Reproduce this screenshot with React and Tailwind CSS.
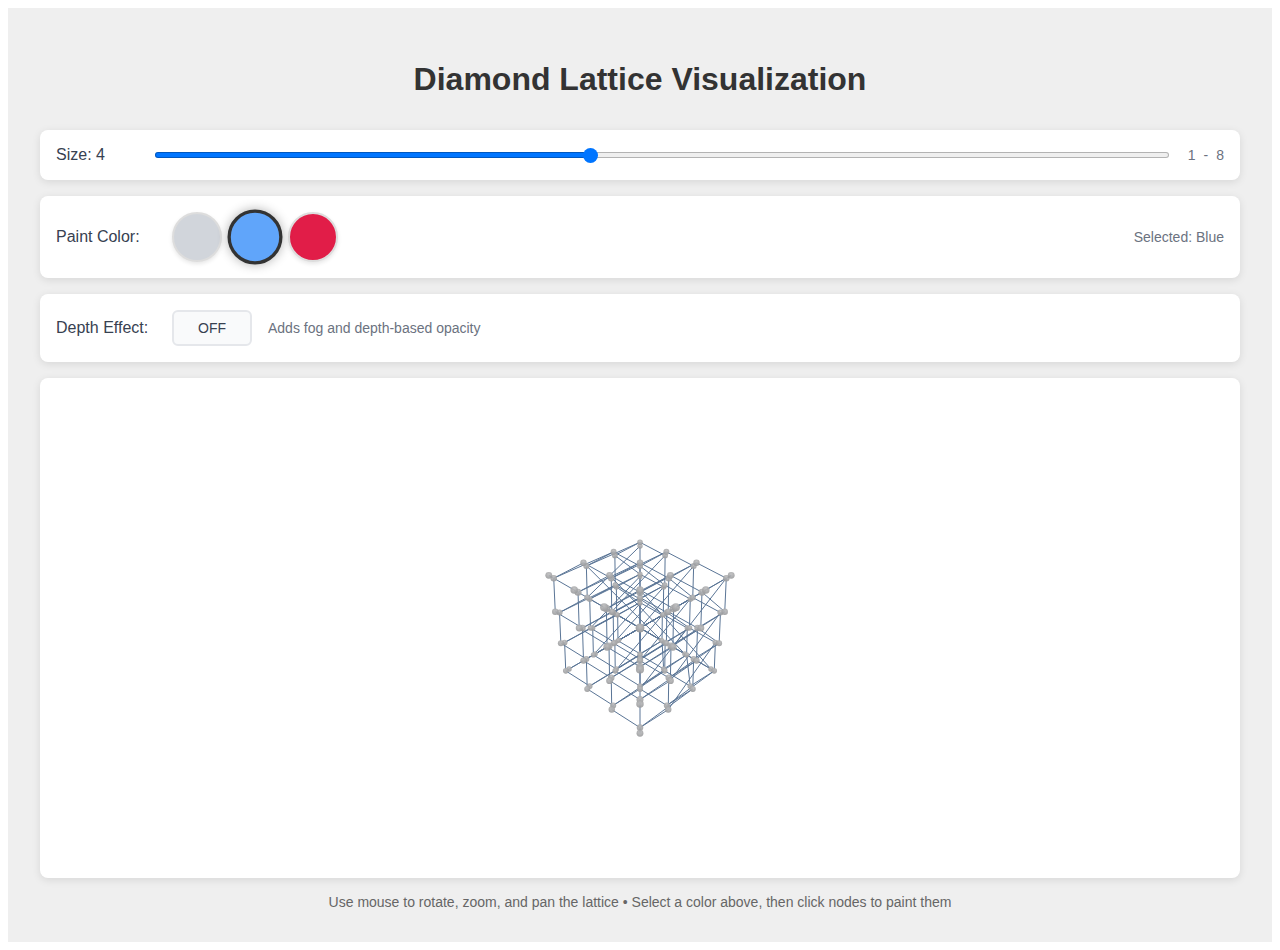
import { useState } from "react";

const CELL_OFFSET = 0.25;
const CAMERA = 5;
const FOCAL = 325.8;

// Perspective projection for a camera on the cube diagonal, looking at the origin.
function project(x, y, z) {
  const depth = (3 * CAMERA - x - y - z) / Math.sqrt(3);
  const f = FOCAL / depth;
  return {
    x: (f * (x - z)) / Math.SQRT2,
    y: (-f * (2 * y - x - z)) / Math.sqrt(6),
    r: 0.08 * f,
    depth,
  };
}

// Two interleaved cubic sublattices; each first-kind node bonds to its
// partner and to the partners one step back along every axis. The strand
// runs on from the last bond of one node to the next node.
function buildLattice(size) {
  const start = -(size - 1 + CELL_OFFSET) / 2;
  const a = (i, j, k) => ({ ...project(i + start, j + start, k + start), id: `a${i}-${j}-${k}` });
  const b = (i, j, k) => {
    const s = start + CELL_OFFSET;
    return { ...project(i + s, j + s, k + s), id: `b${i}-${j}-${k}` };
  };
  const nodes = [];
  const segments = [];
  let previous = null;
  for (let i = 0; i < size; i++) {
    for (let j = 0; j < size; j++) {
      for (let k = 0; k < size; k++) {
        const node = a(i, j, k);
        const partners = [b(i, j, k)];
        if (i > 0) partners.push(b(i - 1, j, k));
        if (j > 0) partners.push(b(i, j - 1, k));
        if (k > 0) partners.push(b(i, j, k - 1));
        nodes.push(node, partners[0]);
        if (previous) segments.push([previous, node]);
        partners.forEach((partner) => segments.push([node, partner]));
        previous = partners[partners.length - 1];
      }
    }
  }
  nodes.sort((p, q) => q.depth - p.depth);
  return { nodes, segments };
}

const COLORS = [
  { name: "Gray", fill: "bg-[#d1d5db]", light: "#bebebf", dark: "#98999b" },
  { name: "Blue", fill: "bg-[#60a5fa]", light: "#7db4fb", dark: "#4a86dc" },
  { name: "Red", fill: "bg-[#e11d48]", light: "#ee4a6c", dark: "#b81439" },
];

function Card({ children }) {
  return (
    <section className="flex items-center gap-4 rounded-lg bg-white p-4 shadow-[0_2px_8px_rgba(0,0,0,0.1)]">
      {children}
    </section>
  );
}

function Lattice({ size, painted, onPaint }) {
  const { nodes, segments } = buildLattice(size);
  return (
    <svg viewBox="-250 -250 500 500" className="block h-[500px] w-full" role="img" aria-label="Diamond lattice">
      <defs>
        {COLORS.map((c, i) => (
          <radialGradient key={c.name} id={`node-${i}`} cx="0.5" cy="0.35" r="0.65">
            <stop offset="0" stopColor={c.light} />
            <stop offset="1" stopColor={c.dark} />
          </radialGradient>
        ))}
      </defs>
      <g stroke="#5a7596" strokeWidth="1">
        {segments.map(([p, q], i) => (
          <line key={i} x1={p.x} y1={p.y} x2={q.x} y2={q.y} />
        ))}
      </g>
      {nodes.map((p) => (
        <circle
          key={p.id}
          cx={p.x}
          cy={p.y}
          r={p.r}
          fill={`url(#node-${painted[p.id] ?? 0})`}
          fillOpacity="0.9"
          onClick={() => onPaint(p.id)}
        />
      ))}
    </svg>
  );
}

export default function App() {
  const [size, setSize] = useState(4);
  const [color, setColor] = useState(1);
  const [depth, setDepth] = useState(false);
  const [painted, setPainted] = useState({});
  const filled = ((size - 1) / 7) * 100;

  return (
    <main className="m-2 bg-[#efefef] p-8 font-['Liberation_Sans',Arial,sans-serif] text-[#374151]">
      <h1 className="pt-5 pb-8 text-center text-[32px] leading-[38px] font-bold text-[#333]">
        Diamond Lattice Visualization
      </h1>

      <div className="flex flex-col gap-4">
        <Card>
          <label htmlFor="size" className="w-20 text-base leading-[18px]">
            Size: {size}
          </label>
          <input
            id="size"
            type="range"
            min="1"
            max="8"
            value={size}
            onChange={(e) => setSize(Number(e.target.value))}
            style={{ backgroundImage: `linear-gradient(to right, #0075ff ${filled}%, #efefef ${filled}%)` }}
            className="mx-[3px] h-1.5 min-w-0 flex-1 appearance-none rounded-full shadow-[inset_0_0_0_1px_rgba(0,0,0,0.25)] [&::-webkit-slider-thumb]:size-[15px] [&::-webkit-slider-thumb]:appearance-none [&::-webkit-slider-thumb]:rounded-full [&::-webkit-slider-thumb]:bg-[#0075ff]"
          />
          <div className="flex gap-2 text-sm leading-4 text-[#6b7280]">
            <span>1</span>
            <span>-</span>
            <span>8</span>
          </div>
        </Card>

        <Card>
          <span className="w-[100px] text-base leading-[18px]">Paint Color:</span>
          <div className="flex gap-2">
            {COLORS.map((c, i) => (
              <button
                key={c.name}
                type="button"
                aria-label={c.name}
                aria-pressed={i === color}
                onClick={() => setColor(i)}
                className={`size-[50px] rounded-full ${c.fill} ${
                  i === color
                    ? "scale-110 border-3 border-[#333] shadow-[0_0_10px_rgba(0,0,0,0.3)]"
                    : "border-2 border-[#ddd] shadow-[0_2px_4px_rgba(0,0,0,0.1)]"
                }`}
              />
            ))}
          </div>
          <span className="ml-auto text-sm leading-4 text-[#6b7280]">Selected: {COLORS[color].name}</span>
        </Card>

        <Card>
          <span className="w-[100px] text-base leading-[18px]">Depth Effect:</span>
          <button
            type="button"
            aria-pressed={depth}
            onClick={() => setDepth(!depth)}
            className="h-9 w-20 rounded-md border-2 border-[#e5e7eb] bg-[#f9fafb] text-sm leading-4"
          >
            {depth ? "ON" : "OFF"}
          </button>
          <span className="text-sm leading-4 text-[#6b7280]">Adds fog and depth-based opacity</span>
        </Card>

        <section className="overflow-hidden rounded-lg bg-white shadow-[0_2px_8px_rgba(0,0,0,0.1)]">
          <Lattice
            size={size}
            painted={painted}
            onPaint={(id) => setPainted({ ...painted, [id]: color })}
          />
        </section>

        <p className="text-center text-sm leading-4 text-[#666]">
          Use mouse to rotate, zoom, and pan the lattice • Select a color above, then click nodes to paint them
        </p>
      </div>
    </main>
  );
}
